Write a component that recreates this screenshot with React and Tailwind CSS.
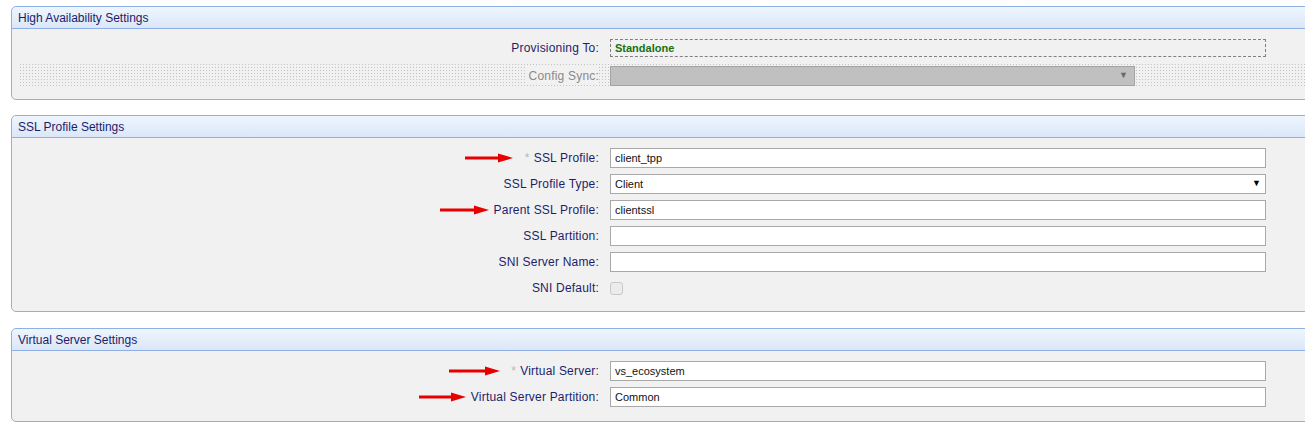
import React from 'react'

const Arrow = ({ w = 48 }) => (
  <svg width={w} height="10" viewBox={`0 0 ${w} 10`} className="shrink-0">
    <rect x="0" y="3.5" width={w - 12} height="3" fill="#e60000" />
    <polygon points={`${w - 15},0.5 ${w},5 ${w - 15},9.5`} fill="#e60000" />
  </svg>
)

const Panel = ({ title, children, bodyClass }) => (
  <div className="ml-[11px] w-[1310px] rounded-[5px] border border-[#8eb0e4] bg-[#f1f1f1]">
    <div className="flex h-[22px] items-center rounded-t-[5px] border-b border-[#8eb0e4] bg-gradient-to-b from-[#eef5fd] to-[#dbe7f8] pl-[6px] text-[12px] text-[#1c1c6c]">
      {title}
    </div>
    <div className={bodyClass}>{children}</div>
  </div>
)

const Row = ({ label, arrow, arrowGap = 'mr-[5px]', req, children }) => (
  <div className="flex h-[20px] items-center">
    <div className="flex w-[598px] items-center justify-end pr-[11px] text-[12px] tracking-[0.2px] text-[#1e1e6a]">
      {arrow && (
        <span className={arrowGap}>
          <Arrow w={arrow} />
        </span>
      )}
      {req && <span className="mr-[4px] text-[12px] text-[#b8b8b8]">*</span>}
      <span>{label}</span>
    </div>
    {children}
  </div>
)

const Input = ({ value }) => (
  <div className="flex h-[20px] w-[656px] items-center border border-[#a9a9a9] bg-white pl-[4px] text-[11px] text-[#111]">
    {value}
  </div>
)

export default function App() {
  return (
    <div className="min-h-[426px] w-[1305px] overflow-hidden bg-white pt-[6px] font-['Liberation_Sans',Arial,sans-serif]">
      <Panel title="High Availability Settings" bodyClass="flex flex-col gap-[6px] pb-[11px] pt-[10px]">
        <div className="flex h-[18px] items-center">
          <div className="w-[598px] pr-[11px] text-right text-[12px] tracking-[0.2px] text-[#1e1e6a]">Provisioning To:</div>
          <div className="flex h-[18px] w-[656px] items-center border border-dashed border-[#808080] pl-[4px] text-[11px] font-bold text-[#137313]">
            Standalone
          </div>
        </div>
        <div className="ml-[7px] flex h-[25px] items-center bg-[radial-gradient(circle,#c2c2c2_0.7px,transparent_0.9px)] bg-[length:3px_3px]">
          <div className="flex w-[591px] justify-end pr-[11px]">
            <span className="bg-[#f1f1f1] pl-[3px] text-[12px] tracking-[0.2px] text-[#8a8a8a]">Config Sync:</span>
          </div>
          <div className="flex h-[20px] w-[525px] items-center justify-end border border-[#a3a3a3] bg-[#c0c0c0] pr-[6px] text-[9px] text-[#6a6a6a]">
            ▼
          </div>
        </div>
      </Panel>

      <div className="h-[15px]" />

      <Panel title="SSL Profile Settings" bodyClass="flex flex-col gap-[6px] pb-[13px] pt-[10px]">
        <Row label="SSL Profile:" arrow={48} arrowGap="mr-[12px]" req>
          <Input value="client_tpp" />
        </Row>
        <Row label="SSL Profile Type:">
          <div className="flex h-[20px] w-[656px] items-center justify-between border border-[#a9a9a9] bg-white pl-[4px] pr-[4px] text-[11px] text-[#111]">
            <span>Client</span>
            <span className="text-[9px] text-black">▼</span>
          </div>
        </Row>
        <Row label="Parent SSL Profile:" arrow={49}>
          <Input value="clientssl" />
        </Row>
        <Row label="SSL Partition:">
          <Input value="" />
        </Row>
        <Row label="SNI Server Name:">
          <Input value="" />
        </Row>
        <Row label="SNI Default:">
          <div className="h-[13px] w-[13px] rounded-[3px] border border-[#c8c8c8] bg-[#ececec]" />
        </Row>
      </Panel>

      <div className="h-[16px]" />

      <Panel title="Virtual Server Settings" bodyClass="flex flex-col gap-[6px] pb-[14px] pt-[10px]">
        <Row label="Virtual Server:" arrow={51} arrowGap="mr-[11px]" req>
          <Input value="vs_ecosystem" />
        </Row>
        <Row label="Virtual Server Partition:" arrow={47}>
          <Input value="Common" />
        </Row>
      </Panel>
    </div>
  )
}
